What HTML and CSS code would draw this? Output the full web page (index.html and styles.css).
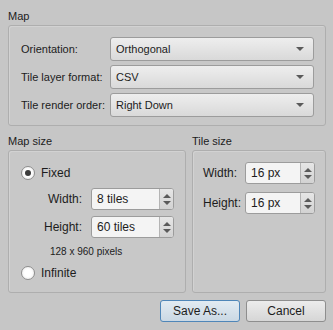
FILE: index.html
```html
<!DOCTYPE html>
<html lang="en">
<head>
  <meta charset="UTF-8">
  <title>New Map</title>
  <link rel="stylesheet" href="styles.css">
</head>
<body>

  <div class="dialog">

    <!-- Map -->
    <div class="group-title">Map</div>
    <div class="group map-group">
      <label class="form-label">Orientation:</label>
      <div class="combo">Orthogonal<span class="arrow"></span></div>
      <label class="form-label">Tile layer format:</label>
      <div class="combo">CSV<span class="arrow"></span></div>
      <label class="form-label">Tile render order:</label>
      <div class="combo">Right Down<span class="arrow"></span></div>
    </div>

    <div class="size-row">

      <!-- Map size -->
      <div class="size-col map-size">
        <div class="group-title">Map size</div>
        <div class="group">
          <div class="radio-row">
            <span class="radio checked"></span>Fixed
          </div>
          <div class="spin-grid fixed-grid">
            <label class="spin-label">Width:</label>
            <div class="spin"><span class="spin-value">8 tiles</span><span class="spin-btns"><i class="up"></i><i class="down"></i></span></div>
            <label class="spin-label">Height:</label>
            <div class="spin"><span class="spin-value">60 tiles</span><span class="spin-btns"><i class="up"></i><i class="down"></i></span></div>
          </div>
          <div class="pixels">128 x 960 pixels</div>
          <div class="radio-row">
            <span class="radio"></span>Infinite
          </div>
        </div>
      </div>

      <!-- Tile size -->
      <div class="size-col tile-size">
        <div class="group-title">Tile size</div>
        <div class="group">
          <div class="spin-grid tile-grid">
            <label class="spin-label">Width:</label>
            <div class="spin"><span class="spin-value">16 px</span><span class="spin-btns"><i class="up"></i><i class="down"></i></span></div>
            <label class="spin-label">Height:</label>
            <div class="spin"><span class="spin-value">16 px</span><span class="spin-btns"><i class="up"></i><i class="down"></i></span></div>
          </div>
        </div>
      </div>

    </div>

    <div class="buttons">
      <button class="btn default">Save As...</button>
      <button class="btn">Cancel</button>
    </div>

  </div>

</body>
</html>
```

FILE: styles.css
```css
body {
  margin: 0;
  background: #c6c6c6;
  font-family: "Liberation Sans", Arial, sans-serif;
  font-size: 11px;
  color: #1c1c1c;
}

.dialog {
  width: 318px;
  padding: 10px 7px 0 8px;
}

.group-title {
  height: 15px;
  line-height: 12px;
  white-space: nowrap;
}

.group {
  border: 1px solid #aeaeae;
  border-radius: 3px;
  background: #c8c8c8;
  box-shadow: inset 1px 1px 0 #d2d2d2;
}

/* map block */
.map-group {
  display: grid;
  grid-template-columns: 90px 1fr;
  row-gap: 4px;
  padding: 11px 11px 8px 11px;
  align-items: center;
}

.form-label {
  padding-left: 1px;
  white-space: nowrap;
}

.combo {
  position: relative;
  height: 22px;
  line-height: 22px;
  padding-left: 5px;
  border: 1px solid #9c9c9c;
  border-radius: 3px;
  background: linear-gradient(#eeeeee, #d9d9d9);
}

.arrow {
  position: absolute;
  right: 9px;
  top: 9px;
  width: 0;
  height: 0;
  border-left: 4px solid transparent;
  border-right: 4px solid transparent;
  border-top: 4px solid #5a5a5a;
}

/* sizes */
.size-row {
  display: flex;
  gap: 6px;
  margin-top: 9px;
}

.map-size {
  width: 178px;
}

.tile-size {
  flex: 1;
}

.size-col .group {
  height: 143px;
  box-sizing: border-box;
}

.map-size .group {
  padding: 14px 0 0 12px;
}

.radio-row {
  display: flex;
  align-items: center;
  height: 16px;
  font-size: 12px;
}

.radio {
  width: 12px;
  height: 12px;
  margin-right: 6px;
  border: 1px solid #8e8e8e;
  border-radius: 50%;
  background: radial-gradient(circle, #ffffff 40%, #e6e6e6 100%);
  display: flex;
  align-items: center;
  justify-content: center;
}

.radio.checked::after {
  content: "";
  width: 6px;
  height: 6px;
  border-radius: 50%;
  background: #3c3c3c;
}

.spin-grid {
  display: grid;
  align-items: center;
}

.fixed-grid {
  grid-template-columns: 70px 83px;
  row-gap: 6px;
  margin-top: 7px;
}

.tile-grid {
  grid-template-columns: 42px 70px;
  row-gap: 8px;
  padding: 11px 0 0 10px;
}

.spin-label {
  text-align: right;
  padding-right: 9px;
  font-size: 12px;
}

.tile-grid .spin-label {
  text-align: left;
  padding-right: 0;
}

.spin {
  display: flex;
  height: 22px;
  border: 1px solid #9c9c9c;
  border-radius: 3px;
  background: #f4f4f4;
  box-sizing: border-box;
}

.spin-value {
  flex: 1;
  line-height: 20px;
  padding-left: 5px;
  font-size: 12px;
}

.spin-btns {
  width: 13px;
  border-left: 1px solid #b4b4b4;
  background: linear-gradient(#e6e6e6, #d2d2d2);
  border-radius: 0 2px 2px 0;
  display: flex;
  flex-direction: column;
  align-items: center;
  justify-content: center;
  gap: 3px;
}

.spin-btns i {
  width: 0;
  height: 0;
  border-left: 4px solid transparent;
  border-right: 4px solid transparent;
}

.spin-btns .up {
  border-bottom: 4px solid #5a5a5a;
}

.spin-btns .down {
  border-top: 4px solid #5a5a5a;
}

.pixels {
  font-size: 10px;
  padding-left: 29px;
  margin-top: 7px;
  margin-bottom: 7px;
  height: 13px;
  line-height: 13px;
}

/* buttons */
.buttons {
  display: flex;
  justify-content: flex-end;
  gap: 6px;
  margin-top: 7px;
}

.btn {
  width: 80px;
  height: 22px;
  font-family: inherit;
  font-size: 12px;
  color: #1c1c1c;
  border: 1px solid #8e8e8e;
  border-radius: 3px;
  background: linear-gradient(#ececec, #d6d6d6);
  padding: 0;
}

.btn.default {
  border-color: #4f86b8;
  background: linear-gradient(#e2ebf2, #cad8e4);
}
```
